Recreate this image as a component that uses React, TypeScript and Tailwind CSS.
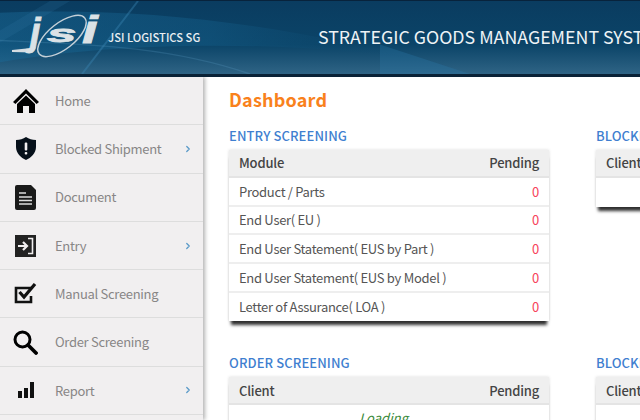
import { ChevronRight } from 'lucide-react';

const font = { fontFamily: '"Noto Sans CJK SC", "Noto Sans", sans-serif' };

function HeaderArt() {
  return (
    <svg className="absolute inset-0 h-full w-full" viewBox="0 0 640 74" preserveAspectRatio="none">
      <defs>
        <linearGradient id="hdr" x1="0" y1="0" x2="0" y2="1">
          <stop offset="0" stopColor="#0a3c60" />
          <stop offset="0.6" stopColor="#0b4468" />
          <stop offset="1" stopColor="#2f6485" />
        </linearGradient>
        <linearGradient id="glow" x1="0" y1="0" x2="1" y2="0">
          <stop offset="0" stopColor="#1a6a98" stopOpacity="0.9" />
          <stop offset="0.5" stopColor="#15608c" stopOpacity="0.8" />
          <stop offset="1" stopColor="#0b4468" stopOpacity="0" />
        </linearGradient>
      </defs>
      <rect width="640" height="74" fill="url(#hdr)" />
      <path d="M0 12 C120 6 260 18 420 60 C300 40 120 40 0 62 Z" fill="url(#glow)" opacity="0.5" />
      <path d="M0 30 L50 0 L70 0 L0 42 Z" fill="#3a86b4" opacity="0.15" />
      <path d="M138 0 L82 74" stroke="#3a86b4" strokeWidth="2" opacity="0.4" />
      <path d="M0 40 C90 44 170 46 250 74" stroke="#5b9cc2" strokeWidth="1.500" fill="none" opacity="0.25" />
      <path d="M380 44 L470 74 L380 74 Z" fill="#2a7cab" opacity="0.3" />
    </svg>
  );
}

function Logo() {
  return (
    <svg width="106" height="73" viewBox="0 1 106 73" className="shrink-0">
      <ellipse cx="62" cy="36" rx="29" ry="13" transform="rotate(-38 62 36)" fill="none" stroke="#c4d0d8" strokeWidth="1.500" />
      <path d="M12 50 L36 47.500 L32 52.500 L12 52 Z" fill="#d5dde2" />
      <g fontFamily="Liberation Sans, sans-serif" fontStyle="italic" fontWeight="700" fill="#dbe2e6" stroke="#dbe2e6" strokeWidth="0.800">
        <text x="30" y="45" fontSize="38">j</text>
        <text transform="translate(47 42) scale(2.2 1)" fontSize="24">s</text>
        <text transform="translate(82 43) scale(1.5 1)" fontSize="38">i</text>
      </g>
    </svg>
  );
}

const icons = {
  home: (
    <svg width="26" height="24" viewBox="0 0 26 24">
      <path d="M13 0 L26 13 L23.600 15 L13 4.400 L2.400 15 L0 13 Z" fill="#000" />
      <path d="M13 6.500 L22 15 V24 H16 V17 H10 V24 H4 V15 Z" fill="#000" />
    </svg>
  ),
  shield: (
    <svg width="20" height="23" viewBox="0 0 20 23">
      <path d="M10 0 C13 2 16 3 20 3 V10 C20 16 15 21 10 23 C5 21 0 16 0 10 V3 C4 3 7 2 10 0 Z" fill="#06101a" />
      <rect x="8.700" y="5.500" width="2.600" height="8" rx="1" fill="#f1eff0" />
      <rect x="8.700" y="15" width="2.600" height="2.600" rx="1" fill="#f1eff0" />
    </svg>
  ),
  doc: (
    <svg width="21" height="25" viewBox="0 0 21 25">
      <path d="M2 0 H16 L21 5 V23 A2 2 0 0 1 19 25 H2 A2 2 0 0 1 0 23 V2 A2 2 0 0 1 2 0 Z" fill="#1a1a1a" />
      <path d="M4 8 H11 M4 12 H17 M4 15.500 H17 M4 19 H17" stroke="#ddd" strokeWidth="1.500" />
    </svg>
  ),
  entry: (
    <svg width="21" height="22" viewBox="0 0 21 22">
      <rect width="21" height="22" fill="#222" />
      <path d="M3 11 H11 M8 7 L12 11 L8 15" stroke="#f1eff0" strokeWidth="2.200" fill="none" />
      <path d="M13 3.500 H17.500 V18.500 H13" stroke="#f1eff0" strokeWidth="1.600" fill="none" />
    </svg>
  ),
  check: (
    <svg width="23" height="21" viewBox="0 0 23 21">
      <path d="M17 6 V5 H2 V19 H17 V13" fill="none" stroke="#111" strokeWidth="2.600" />
      <path d="M5.500 9 L10 14 L21 1" fill="none" stroke="#111" strokeWidth="3.200" />
    </svg>
  ),
  search: (
    <svg width="25" height="25" viewBox="0 0 25 25">
      <circle cx="9.500" cy="9.500" r="7.500" fill="none" stroke="#000" strokeWidth="3" />
      <path d="M15 15 L23 23" stroke="#000" strokeWidth="3.800" strokeLinecap="round" />
    </svg>
  ),
  bars: (
    <svg width="16" height="16" viewBox="0 0 16 16">
      <rect x="0" y="9" width="4" height="7" fill="#111" />
      <rect x="6" y="6" width="4" height="10" fill="#111" />
      <rect x="12" y="0" width="4" height="16" fill="#111" />
    </svg>
  ),
};

const menu = [
  { label: 'Home', icon: icons.home },
  { label: 'Blocked Shipment', icon: icons.shield, more: true },
  { label: 'Document', icon: icons.doc },
  { label: 'Entry', icon: icons.entry, more: true },
  { label: 'Manual Screening', icon: icons.check },
  { label: 'Order Screening', icon: icons.search },
  { label: 'Report', icon: icons.bars, more: true },
];

const entryRows = [
  'Product / Parts',
  'End User( EU )',
  'End User Statement( EUS by Part )',
  'End User Statement( EUS by Model )',
  'Letter of Assurance( LOA )',
];

function TableHead({ first }: { first: string }) {
  return (
    <div className="flex h-[28px] items-center justify-between border-b-2 border-[#e4e4e4] bg-[#efefef] px-[10px] text-[13px] font-medium tracking-[-0.2px] text-[#444]">
      <span>{first}</span>
      <span>Pending</span>
    </div>
  );
}

function Panel({ title, first, children }: { title: string; first: string; children: React.ReactNode }) {
  return (
    <section className="w-[320px]">
      <h2 className="mb-[5px] h-[19px] text-[13px] leading-[19px] font-medium tracking-[0.1px] whitespace-nowrap text-[#3f7fd0]">{title}</h2>
      <div className="bg-white shadow-[0_0_3px_rgba(0,0,0,0.14),0_6px_3px_-2px_rgba(0,0,0,0.8)]">
        <TableHead first={first} />
        {children}
      </div>
    </section>
  );
}

export default function App() {
  return (
    <div className="flex h-[420px] w-[640px] flex-col overflow-hidden bg-white" style={font}>
      <header className="relative h-[77px] shrink-0 overflow-hidden border-t border-b-[3px] border-t-[#08233c] border-b-[#0a2236]">
        <HeaderArt />
        <div className="relative flex h-full items-center">
          <Logo />
          <span className="mt-[-1px] ml-[2px] w-[210px] shrink-0 text-[11.200px] font-medium whitespace-nowrap text-[#e9eef2]">JSI LOGISTICS SG</span>
          <span className="mt-[-3px] text-[17.800px] whitespace-nowrap text-[#eef3f6]">
            STRATEGIC GOODS MANAGEMENT SYSTEM
          </span>
        </div>
      </header>
      <div className="flex min-h-0 flex-1">
        <nav className="w-[203px] shrink-0 bg-[#f1eff0] shadow-[2px_0_4px_rgba(0,0,0,0.3)]">
          {menu.map((item) => (
            <div key={item.label} className="flex h-[48.300px] items-center border-b border-[#dddddd] pr-[10px]">
              <div className="flex w-[55px] shrink-0 justify-center pr-[4px]">{item.icon}</div>
              <span className="flex-1 text-[13px] tracking-[-0.3px] text-[#888686]">{item.label}</span>
              {item.more && <ChevronRight size={10} strokeWidth={3} className="text-[#5a9ac8]" />}
            </div>
          ))}
        </nav>
        <main className="min-w-0 flex-1 pt-[10px] pl-[26px]">
          <h1 className="mb-[15px] text-[18px] leading-[24px] font-bold tracking-[0.2px] text-[#f9811c]">Dashboard</h1>
          <div className="grid w-[720px] grid-cols-[320px_320px] gap-x-[47px] gap-y-[32px]">
            <Panel title="ENTRY SCREENING" first="Module">
              {entryRows.map((row) => (
                <div key={row} className="flex h-[28.700px] items-center justify-between border-b-2 border-[#eeeeee] px-[10px] text-[13px] tracking-[-0.3px] text-[#555] last:border-b-0">
                  <span>{row}</span>
                  <span className="text-[#f7425a]">0</span>
                </div>
              ))}
            </Panel>
            <div className="self-start">
              <Panel title="BLOCKED SHIPMENT" first="Client">
                <div className="h-[29px]" />
              </Panel>
            </div>
            <Panel title="ORDER SCREENING" first="Client">
              <div className="pt-[3px] text-center text-[13px] text-[#3a8a3a] italic">Loading...</div>
            </Panel>
            <Panel title="BLOCKED SHIPMENT" first="Client">
              <div className="h-[29px]" />
            </Panel>
          </div>
        </main>
      </div>
    </div>
  );
}
